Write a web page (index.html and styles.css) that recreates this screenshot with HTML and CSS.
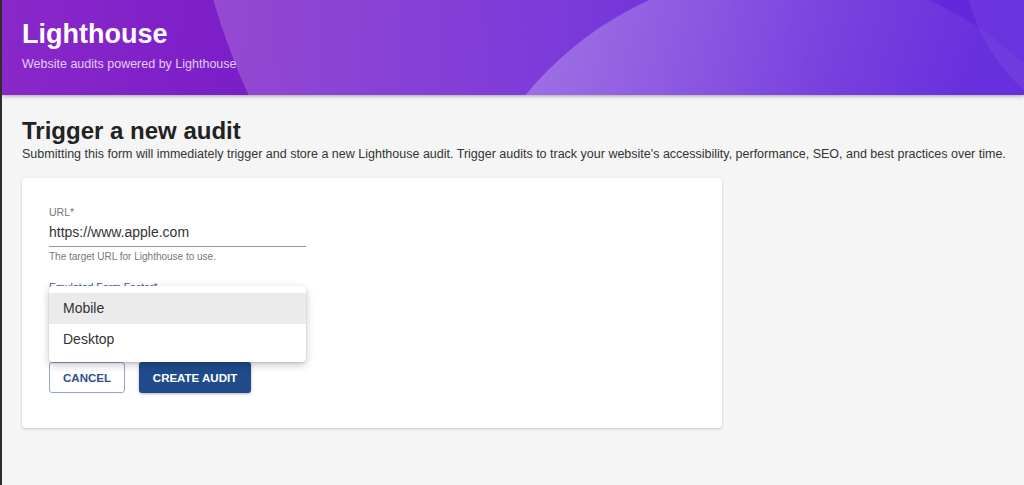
FILE: index.html
```html
<!DOCTYPE html>
<html lang="en">
<head>
    <meta charset="UTF-8">
    <meta name="viewport" content="width=device-width, initial-scale=1.0">
    <title>Lighthouse - Trigger a new audit</title>
    <link rel="stylesheet" href="styles.css">
</head>
<body>
    <header class="hero">
        <span class="blob blob-a"></span>
        <span class="blob blob-b"></span>
        <span class="blob blob-c"></span>
        <div class="hero-text">
            <h1>Lighthouse</h1>
            <p>Website audits powered by Lighthouse</p>
        </div>
    </header>

    <main class="page">
        <h2>Trigger a new audit</h2>
        <p class="lead">Submitting this form will immediately trigger and store a new Lighthouse audit. Trigger audits to track your website's accessibility, performance, SEO, and best practices over time.</p>

        <form class="card">
            <div class="field">
                <label class="field-label">URL*</label>
                <div class="field-input">https://www.apple.com</div>
                <div class="field-help">The target URL for Lighthouse to use.</div>
            </div>

            <div class="field select-field">
                <label class="field-label active">Emulated Form Factor*</label>
                <ul class="menu">
                    <li class="selected">Mobile</li>
                    <li>Desktop</li>
                </ul>
            </div>

            <div class="actions">
                <button type="button" class="btn btn-outline">Cancel</button>
                <button type="button" class="btn btn-primary">Create audit</button>
            </div>
        </form>
    </main>
</body>
</html>
```

FILE: styles.css
```css
html {
    background: #f5f5f5;
}
body {
    margin: 0;
    min-height: 485px;
    font-family: "Liberation Sans", Arial, sans-serif;
    background: #f5f5f5;
    border-left: 2px solid #2e2e2e;
    color: #222;
    overflow: hidden;
}
.hero {
    position: relative;
    height: 95px;
    overflow: hidden;
    background: linear-gradient(100deg, #8a28c9 0%, #7a1ec8 25%, #6c24d6 55%, #5c20dc 100%);
    box-shadow: 0 1px 4px rgba(0,0,0,0.35);
}
.blob {
    position: absolute;
    border-radius: 50%;
}
.blob-a {
    left: 183px;
    top: -917px;
    width: 1434px;
    height: 1434px;
    background: linear-gradient(to right, rgba(255,255,255,0.2), rgba(255,255,255,0.03) 45%);
}
.blob-b {
    left: 447px;
    top: -30px;
    width: 680px;
    height: 680px;
    background: linear-gradient(110deg, rgba(255,255,255,0.32), rgba(255,255,255,0.04) 60%);
}
.blob-c {
    left: 960px;
    top: -240px;
    width: 380px;
    height: 380px;
    background: rgba(255,255,255,0.06);
}
.hero-text {
    position: relative;
    padding: 18px 20px 0;
    color: white;
}
.hero h1 {
    margin: 0;
    font-size: 27px;
    line-height: 32px;
    font-weight: bold;
}
.hero p {
    margin: 7px 0 0;
    font-size: 12.5px;
    line-height: 15px;
    color: #e2cdf5;
}
.page {
    padding: 22px 20px 40px;
}
.page h2 {
    margin: 0;
    font-size: 24px;
    line-height: 28px;
    font-weight: bold;
    color: #222;
}
.lead {
    margin: 2px 0 0;
    font-size: 12.5px;
    line-height: 14px;
    color: #333;
    white-space: nowrap;
}
.card {
    width: 700px;
    box-sizing: border-box;
    margin-top: 17px;
    padding: 28px 27px 35px;
    background: white;
    border-radius: 4px;
    box-shadow: 0 1px 3px rgba(0,0,0,0.2);
}
.field {
    width: 257px;
}
.field-label {
    display: block;
    font-size: 10.5px;
    line-height: 12px;
    color: #777;
}
.field-label.active {
    color: #3b5b9a;
}
.field-input {
    margin-top: 5px;
    padding-bottom: 5px;
    font-size: 14px;
    line-height: 18px;
    color: #333;
    border-bottom: 1px solid #999;
}
.field-help {
    margin-top: 4px;
    font-size: 10px;
    line-height: 12px;
    color: #777;
}
.select-field {
    position: relative;
    margin-top: 18px;
    height: 63px;
}
.menu {
    position: absolute;
    top: 5px;
    left: 0;
    width: 257px;
    margin: 0;
    padding: 7px 0;
    list-style: none;
    background: white;
    border-radius: 4px;
    box-shadow: 0 3px 8px rgba(0,0,0,0.22), 0 1px 2px rgba(0,0,0,0.12);
}
.menu li {
    height: 31px;
    line-height: 31px;
    padding: 0 14px;
    font-size: 14px;
    color: #333;
}
.menu li.selected {
    background: #ebebeb;
}
.actions {
    display: flex;
    gap: 14px;
    margin-top: 18px;
}
.btn {
    height: 31px;
    padding: 0 13px;
    border-radius: 3px;
    font-family: "Liberation Sans", Arial, sans-serif;
    font-size: 11.5px;
    font-weight: bold;
    text-transform: uppercase;
    cursor: pointer;
}
.btn-outline {
    width: 76px;
    background: white;
    color: #2d4f8c;
    border: 1px solid #93a6c8;
}
.btn-primary {
    width: 112px;
    background: #1f4b8b;
    color: white;
    border: none;
    box-shadow: 0 1px 3px rgba(0,0,0,0.3);
}
```
